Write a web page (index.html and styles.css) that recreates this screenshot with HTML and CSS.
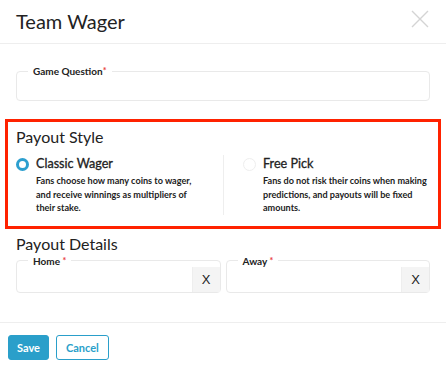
FILE: index.html
```html
<html>

<head>
    <link rel="stylesheet" href="styles.css">
    <title>Team Wager</title>
</head>

<body>
    <div class="modal">
        <div class="modal-header">
            <div class="modal-title">Team Wager</div>
            <div class="close">
                <svg width="18" height="18" viewBox="0 0 18 18">
                    <path d="M1 1 L17 17 M17 1 L1 17" stroke="#d4d4d4" stroke-width="1.4" fill="none" />
                </svg>
            </div>
        </div>

        <div class="modal-body">
            <fieldset class="field">
                <legend>Game Question<span class="req">*</span></legend>
                <input type="text" class="field-input">
            </fieldset>

            <div class="payout-style">
                <div class="section-title">Payout Style</div>
                <div class="options">
                    <div class="option">
                        <span class="radio checked"></span>
                        <div class="option-text">
                            <div class="option-title">Classic Wager</div>
                            <div class="option-desc">Fans choose how many coins to wager, and receive winnings as multipliers of their stake.</div>
                        </div>
                    </div>
                    <div class="option right">
                        <span class="radio"></span>
                        <div class="option-text">
                            <div class="option-title">Free Pick</div>
                            <div class="option-desc">Fans do not risk their coins when making predictions, and payouts will be fixed amounts.</div>
                        </div>
                    </div>
                </div>
            </div>

            <div class="section-title details">Payout Details</div>
            <div class="pair">
                <fieldset class="field addon-field">
                    <legend>Home <span class="req">*</span></legend>
                    <input type="text" class="field-input">
                    <span class="addon">X</span>
                </fieldset>
                <fieldset class="field addon-field">
                    <legend>Away <span class="req">*</span></legend>
                    <input type="text" class="field-input">
                    <span class="addon">X</span>
                </fieldset>
            </div>
        </div>

        <div class="modal-footer">
            <button class="btn btn-primary">Save</button>
            <button class="btn btn-outline">Cancel</button>
        </div>
    </div>
</body>

</html>
```

FILE: styles.css
```css
body {
    margin: 0;
    padding: 0;
    background-color: #fff;
    color: #222;
    font-family: Lato, "Open Sans", sans-serif;
    overflow: hidden;
}

.modal-header {
    height: 43px;
    display: flex;
    align-items: center;
    justify-content: space-between;
    padding: 0 17px 0 16px;
    border-bottom: 1px solid #eeeeee;
}

.modal-title {
    font-size: 20px;
    line-height: 24px;
    margin-top: -2px;
}

.close {
    width: 18px;
    height: 18px;
    margin-top: -6px;
}

.modal-body {
    padding: 21px 5px 0 5px;
}

.field {
    margin: 0 11px;
    padding: 0;
    border: 1px solid #e9e9e9;
    border-radius: 4px;
    min-inline-size: 0;
}

.field legend {
    margin-left: 11px;
    padding: 0 5px;
    font-size: 10px;
    line-height: 12px;
    font-weight: bold;
    color: #222;
}

.req {
    color: #e8403a;
    font-size: 9px;
    vertical-align: top;
}

.field-input {
    display: block;
    width: 100%;
    height: 23px;
    border: none;
    outline: none;
    padding: 0 8px;
    box-sizing: border-box;
    background: transparent;
}

.payout-style {
    margin-top: 18px;
    border: 3px solid #ff2200;
    padding: 5px 8px 11px 8px;
}

.section-title {
    font-size: 16px;
    line-height: 20px;
}

.options {
    display: grid;
    grid-template-columns: 1fr 1fr;
    margin-top: 8px;
}

.option {
    display: flex;
    align-items: flex-start;
    gap: 7px;
}

.option.right {
    border-left: 1px solid #eeeeee;
    padding-left: 19px;
}

.radio {
    flex: none;
    width: 13px;
    height: 13px;
    margin-top: 3px;
    border-radius: 50%;
    border: 1px solid #eeeeee;
    box-sizing: border-box;
    background: #fff;
}

.radio.checked {
    border: 3.5px solid #2c9fcf;
}

.option-title {
    font-size: 12.6px;
    line-height: 18px;
    -webkit-text-stroke: 0.3px #222;
}

.option-desc {
    font-size: 9.1px;
    line-height: 13.5px;
    font-weight: bold;
    padding-right: 26px;
    margin-top: 1px;
}

.option.right .option-desc {
    padding-right: 0;
    margin-right: -2px;
}

.section-title.details {
    margin: 5px 11px 0 11px;
}

.pair {
    display: flex;
    gap: 5px;
    margin: 1px 11px 0 11px;
}

.pair .field {
    margin: 0;
    flex: 1;
}

.addon-field {
    display: flex;
}

.addon-field .field-input {
    flex: 1;
    height: 25px;
}

.addon {
    width: 27px;
    flex: none;
    display: flex;
    align-items: center;
    justify-content: center;
    background-color: #f4f4f4;
    border-left: 1px solid #eeeeee;
    font-family: "Liberation Sans", sans-serif;
    font-size: 13px;
    color: #222;
}

.modal-footer {
    margin-top: 29px;
    border-top: 1px solid #eeeeee;
    padding: 12px 8px;
    display: flex;
    gap: 7px;
}

.btn {
    height: 25px;
    padding: 0 8px;
    font-family: Lato, sans-serif;
    font-size: 11px;
    font-weight: bold;
    border-radius: 3px;
    cursor: pointer;
}

.btn-primary {
    background-color: #2a9fca;
    border: 1px solid #2a9fca;
    color: #fff;
}

.btn-outline {
    background-color: #fff;
    border: 1px solid #2a9fca;
    color: #2a9fca;
    padding: 0 9px;
}
```
